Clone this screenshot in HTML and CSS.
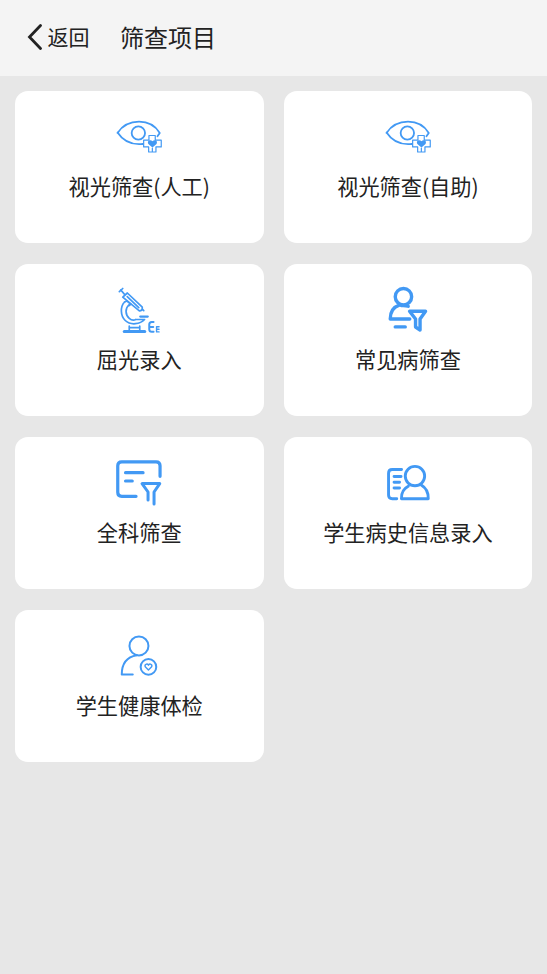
FILE: index.html
```
<!DOCTYPE html>
<html lang="zh-CN">
<head>
<meta charset="utf-8">
<title>筛查项目</title>
<link rel="stylesheet" href="styles.css">
</head>
<body>
<svg class="defs" width="0" height="0" aria-hidden="true">
  <symbol id="eye" viewBox="-.75 -2.7 70 60">
    <g stroke-width="1.8">
      <path d="M38 34.300C26 35.500 17.500 30 12.800 22.800M12.800 23.200C18 15.500 25.500 12 34.300 12S50.800 16.500 55 23.300M55 23.300L52.700 26.600"/>
      <circle cx="33.600" cy="23.300" r="6.700"/>
    </g>
    <path stroke-width="1.200" d="M44.200 25.800H50.500V30.500H56.500V37.200H51.200V42.300H43.900V37.200H38.900V30.500H44.200ZM47.600 38.500V42"/>
    <path class="solid" d="M47.700 37.900L43.600 34.200C41.800 30.800 46 29.600 47.700 31.500C49.400 29.600 53.600 30.800 51.800 34.200Z"/>
  </symbol>
</svg>
<header class="bar">
  <a class="back">
    <svg class="chevron" viewBox="0 0 16 26"><path d="M13.500 1.500L2.500 13L13.500 24.500"/></svg>
    <span>返回</span>
  </a>
  <h1 class="title">筛查项目</h1>
</header>
<main class="grid">
  <a class="card">
    <svg class="icon"><use href="#eye"/></svg>
    <span>视光筛查(人工)</span>
  </a>
  <a class="card">
    <svg class="icon"><use href="#eye"/></svg>
    <span>视光筛查(自助)</span>
  </a>
  <a class="card">
    <svg class="icon" viewBox="-.75 .3 70 60">
      <path stroke-width="1.700" d="M14.600 12L18 8.800M16 10.200L20.500 15.500M18 17.500L22.600 13.300L37.500 27.500Q38 31 34.600 31.200ZM37.500 29.500L39 31M22.500 17L34 28"/>
      <path stroke-width="1.700" d="M19.500 22.500C15.500 27 15.500 36 20.500 40.800C26 46 35.500 44.500 39.800 39.800H31M24.500 24.800C20 29 20.500 35 24.500 38.600C27.500 41.300 30 40.300 31 39.800M19.500 22.500L22 21.200L26 24.500L24 26"/>
      <path stroke-width="2.200" d="M35.500 36.900H43"/>
      <path stroke-width="3" d="M19.500 51.700H40"/>
      <path stroke-width="1.700" d="M24.500 46.500V50M35 46.500V50M25 48H35"/>
      <path stroke-width="2" d="M48.800 42.200H47Q44.500 42.200 44.500 44.700V49.500Q44.500 52 47 52H48.800M44.500 47.200H48.500"/>
      <path stroke-width="1.400" d="M54.300 47H51.800V52.200H54.300M51.800 49.500H54.300"/>
    </svg>
    <span>屈光录入</span>
  </a>
  <a class="card">
    <svg class="icon" viewBox="-2.250 .3 70 60">
      <g stroke-width="3.400">
        <circle cx="28.200" cy="17" r="8.200"/>
        <path d="M24 25.500C18 27.500 15 32 15 39.300H34.500M26 25.800Q30.500 25.500 33 26.600M20 47.200H30"/>
        <path d="M34.300 31.600H50.300L44.800 39.300V50.300L40.300 47.300V39.300Z"/>
      </g>
    </svg>
    <span>常见病筛查</span>
  </a>
  <a class="card">
    <svg class="icon" viewBox="-.75 .2 70 60">
      <g stroke-width="3.200">
        <path d="M55.300 23.500V13Q55.300 9 51.300 9H17Q13 9 13 13V39.500Q13 43.500 17 43.500H31.300M20.800 19.900H38.300M20.800 28.200H27.500"/>
        <path stroke-width="3" d="M43.300 47.300V39.200L37.300 30.800H55L49.300 39.200V51.300"/>
      </g>
    </svg>
    <span>全科筛查</span>
  </a>
  <a class="card">
    <svg class="icon" viewBox="-2.250 .2 70 60">
      <g stroke-width="2.900">
        <path d="M26.300 16.700H17Q13.300 16.700 13.300 20.500V42.300Q13.300 46 17 46H21.500M18.800 23.700H25.800M18.800 29.500H24.300M18.800 35.200H24.300"/>
        <circle cx="39.700" cy="23.300" r="9.700"/>
        <path d="M33 33.500C28 36 26 40.500 26.200 46H53C53.200 40 50.500 35 46 32.300"/>
      </g>
    </svg>
    <span>学生病史信息录入</span>
  </a>
  <a class="card">
    <svg class="icon" viewBox="-.75 1.100 70 60">
      <g stroke-width="2">
        <circle cx="34.200" cy="21" r="9.500"/>
        <path d="M32 30.300C22 32 17 38 17 49.700H28"/>
        <circle cx="43.700" cy="42" r="7.800"/>
      </g>
      <path stroke-width="1.400" d="M43.700 45L40.500 41.800C39.500 39.500 42.400 38.200 43.700 40.300C45 38.200 47.900 39.500 46.900 41.800Z"/>
    </svg>
    <span>学生健康体检</span>
  </a>
</main>
</body>
</html>
```
FILE: styles.css
```
body {
  margin: 0;
  min-height: 974px;
  background: #e7e7e7;
  color: #222;
  font-family: "Noto Sans CJK SC", sans-serif;
}

.defs {
  display: block;
}

.bar {
  display: flex;
  align-items: center;
  box-sizing: border-box;
  height: 76px;
  padding: 0 0 2px 27px;
  background: #f4f4f4;
}

.back {
  display: flex;
  align-items: center;
  gap: 4.500px;
  width: 93px;
  font-size: 21px;
  line-height: 30px;
}

.back span {
  margin-top: -2px;
}

.chevron {
  width: 16px;
  height: 26px;
  margin-top: -1px;
  fill: none;
  stroke: #222;
  stroke-width: 2.8;
  stroke-linecap: round;
}

.title {
  margin: 0;
  font-size: 24px;
  font-weight: 400;
  line-height: 34px;
}

.grid {
  display: grid;
  grid-template-columns: 248.5px 248.5px;
  grid-auto-rows: 152.3px;
  gap: 20.7px 20.2px;
  padding: 15.2px 15px;
}

.card {
  display: flex;
  flex-direction: column;
  align-items: center;
  box-sizing: border-box;
  padding-top: 16px;
  border-radius: 13px;
  background: #fff;
  font-size: 21.2px;
  line-height: 30px;
}

.icon {
  width: 70px;
  height: 60px;
  margin-bottom: 4px;
  fill: none;
  stroke: #4299f4;
  stroke-linecap: round;
  stroke-linejoin: round;
}

.solid {
  fill: #4299f4;
  stroke: none;
}
```
